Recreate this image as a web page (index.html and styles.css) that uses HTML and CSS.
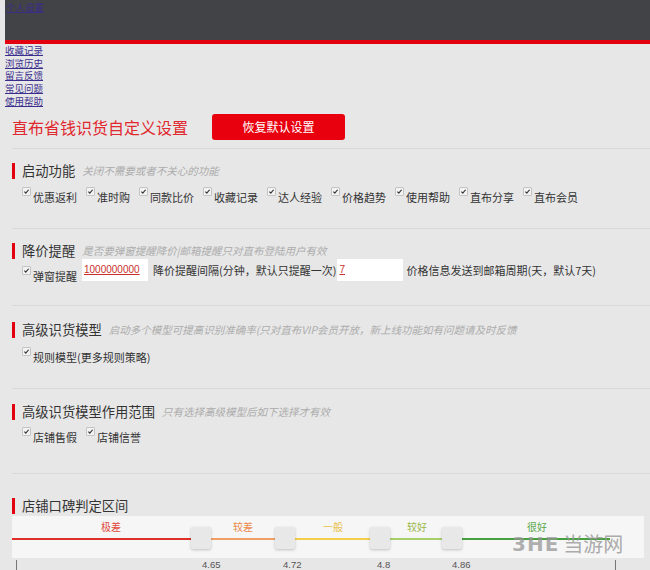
FILE: index.html
```html
<!DOCTYPE html>
<html lang="zh-CN">
<head>
<meta charset="utf-8">
<title>直布省钱识货自定义设置</title>
<link rel="stylesheet" href="styles.css">
</head>
<body>
<header class="top">
  <a class="top-link" href="#">个人设置</a>
</header>
<nav class="links">
  <a href="#">收藏记录</a>
  <a href="#">浏览历史</a>
  <a href="#">留言反馈</a>
  <a href="#">常见问题</a>
  <a href="#">使用帮助</a>
</nav>
<main class="content">
  <div class="title-row">
    <h1 class="title">直布省钱识货自定义设置</h1>
    <button class="reset">恢复默认设置</button>
  </div>

  <section class="sec s1">
    <div class="head"><span class="bar"></span><h2>启动功能</h2><em>关闭不需要或者不关心的功能</em></div>
    <div class="row">
      <label class="chk"><span class="box"><svg viewBox="0 0 8 8"><path d="M1.6 4.2 L3.2 5.8 L6.4 2" fill="none" stroke="#333" stroke-width="1.3"/></svg></span><span class="txt">优惠返利</span></label>
      <label class="chk"><span class="box"><svg viewBox="0 0 8 8"><path d="M1.6 4.2 L3.2 5.8 L6.4 2" fill="none" stroke="#333" stroke-width="1.3"/></svg></span><span class="txt">准时购</span></label>
      <label class="chk"><span class="box"><svg viewBox="0 0 8 8"><path d="M1.6 4.2 L3.2 5.8 L6.4 2" fill="none" stroke="#333" stroke-width="1.3"/></svg></span><span class="txt">同款比价</span></label>
      <label class="chk"><span class="box"><svg viewBox="0 0 8 8"><path d="M1.6 4.2 L3.2 5.8 L6.4 2" fill="none" stroke="#333" stroke-width="1.3"/></svg></span><span class="txt">收藏记录</span></label>
      <label class="chk"><span class="box"><svg viewBox="0 0 8 8"><path d="M1.6 4.2 L3.2 5.8 L6.4 2" fill="none" stroke="#333" stroke-width="1.3"/></svg></span><span class="txt">达人经验</span></label>
      <label class="chk"><span class="box"><svg viewBox="0 0 8 8"><path d="M1.6 4.2 L3.2 5.8 L6.4 2" fill="none" stroke="#333" stroke-width="1.3"/></svg></span><span class="txt">价格趋势</span></label>
      <label class="chk"><span class="box"><svg viewBox="0 0 8 8"><path d="M1.6 4.2 L3.2 5.8 L6.4 2" fill="none" stroke="#333" stroke-width="1.3"/></svg></span><span class="txt">使用帮助</span></label>
      <label class="chk"><span class="box"><svg viewBox="0 0 8 8"><path d="M1.6 4.2 L3.2 5.8 L6.4 2" fill="none" stroke="#333" stroke-width="1.3"/></svg></span><span class="txt">直布分享</span></label>
      <label class="chk"><span class="box"><svg viewBox="0 0 8 8"><path d="M1.6 4.2 L3.2 5.8 L6.4 2" fill="none" stroke="#333" stroke-width="1.3"/></svg></span><span class="txt">直布会员</span></label>
    </div>
  </section>

  <section class="sec s2">
    <div class="head"><span class="bar"></span><h2>降价提醒</h2><em>是否要弹窗提醒降价|邮箱提醒只对直布登陆用户有效</em></div>
    <div class="row row-inputs">
      <label class="chk chk-low"><span class="box"><svg viewBox="0 0 8 8"><path d="M1.6 4.2 L3.2 5.8 L6.4 2" fill="none" stroke="#333" stroke-width="1.3"/></svg></span><span class="txt">弹窗提醒</span></label>
      <span class="field">1000000000</span>
      <span class="plain p1">降价提醒间隔(分钟，默认只提醒一次)</span>
      <span class="field">7</span>
      <span class="plain p2">价格信息发送到邮箱周期(天，默认7天)</span>
    </div>
  </section>

  <section class="sec s3">
    <div class="head"><span class="bar"></span><h2>高级识货模型</h2><em>启动多个模型可提高识别准确率(只对直布VIP会员开放，新上线功能如有问题请及时反馈</em></div>
    <div class="row">
      <label class="chk"><span class="box"><svg viewBox="0 0 8 8"><path d="M1.6 4.2 L3.2 5.8 L6.4 2" fill="none" stroke="#333" stroke-width="1.3"/></svg></span><span class="txt">规则模型(更多规则策略)</span></label>
    </div>
  </section>

  <section class="sec s4">
    <div class="head"><span class="bar"></span><h2>高级识货模型作用范围</h2><em>只有选择高级模型后如下选择才有效</em></div>
    <div class="row">
      <label class="chk"><span class="box"><svg viewBox="0 0 8 8"><path d="M1.6 4.2 L3.2 5.8 L6.4 2" fill="none" stroke="#333" stroke-width="1.3"/></svg></span><span class="txt">店铺售假</span></label>
      <label class="chk"><span class="box"><svg viewBox="0 0 8 8"><path d="M1.6 4.2 L3.2 5.8 L6.4 2" fill="none" stroke="#333" stroke-width="1.3"/></svg></span><span class="txt">店铺信誉</span></label>
    </div>
  </section>

  <section class="sec s5">
    <div class="head"><span class="bar"></span><h2>店铺口碑判定区间</h2></div>
    <div class="slider">
      <span class="lvl l1" style="left:99px">极差</span>
      <span class="lvl l2" style="left:231px">较差</span>
      <span class="lvl l3" style="left:321px">一般</span>
      <span class="lvl l4" style="left:405px">较好</span>
      <span class="lvl l5" style="left:525px">很好</span>
      <span class="track"></span>
      <span class="handle" style="left:179px"></span>
      <span class="handle" style="left:263px"></span>
      <span class="handle" style="left:358px"></span>
      <span class="handle" style="left:430px"></span>
    </div>
    <div class="scale">
      <span class="tick" style="left:4px"></span>
      <span class="num" style="left:190px">4.65</span>
      <span class="num" style="left:271px">4.72</span>
      <span class="num" style="left:365px">4.8</span>
      <span class="num" style="left:440px">4.86</span>
      <span class="tick" style="left:603px"></span>
    </div>
  </section>
</main>
<div class="watermark"><span class="wm-logo">3HE</span><span class="wm-text">当游网</span></div>
</body>
</html>
```

FILE: styles.css
```css
* { box-sizing: border-box; }

html, body {
  margin: 0;
  padding: 0;
  background: #e7e7e7;
  font-family: "Noto Sans CJK SC", "Noto Sans", "Liberation Sans", sans-serif;
  color: #333;
  overflow: hidden;
}

body {
  width: 650px;
  height: 570px;
  position: relative;
}

.top {
  margin-left: 5px;
  height: 44px;
  background: #424347;
  border-bottom: 4px solid #e3000f;
  padding: 0 0 0 1px;
}

.top-link {
  display: block;
  font-size: 9.5px;
  line-height: 15px;
  color: #3a2d86;
}

.links {
  display: flex;
  flex-direction: column;
  align-items: flex-start;
  padding-left: 5px;
}

.links a {
  font-size: 9.5px;
  line-height: 12.7px;
  color: #3b2f8e;
}

.content {
  padding-left: 12px;
}

.title-row {
  display: flex;
  align-items: center;
  margin-top: 6px;
  height: 26px;
  margin-bottom: 8px;
}

.title {
  margin: 0;
  font-size: 16px;
  font-weight: normal;
  color: #e1282e;
  line-height: 26px;
}

.reset {
  margin-left: 24px;
  width: 133px;
  height: 26px;
  border: none;
  border-radius: 3px;
  background: #e8000e;
  color: #fff;
  font-family: inherit;
  font-size: 12px;
  padding: 0;
}

.sec {
  border-top: 1px solid #d9d9d9;
}

.s1 { padding: 14px 0 24px; }
.s2 { padding: 14px 0 22px; }
.s3 { padding: 16px 0 24px; }
.s4 { padding: 15px 0 29px; }
.s5 { padding: 24px 0 0; }

.head {
  display: flex;
  align-items: center;
  height: 16px;
}

.bar {
  width: 3px;
  height: 16px;
  background: #e3000f;
  margin-right: 7px;
}

.head h2 {
  margin: 0;
  font-size: 13.3px;
  font-weight: normal;
  color: #333;
  line-height: 16px;
}

.head em {
  margin-left: 7px;
  font-size: 10.5px;
  color: #acacac;
  font-style: italic;
  white-space: nowrap;
}

.row {
  display: flex;
  align-items: flex-start;
  margin-top: 8px;
  padding-left: 10px;
}

.s3 .row { margin-top: 9px; }
.s4 .row { margin-top: 7px; }

.chk {
  display: flex;
  align-items: flex-start;
  margin-right: 9px;
}

.box {
  width: 9px;
  height: 9px;
  border: 1px solid #c4c4c4;
  background: #f3f3f3;
  border-radius: 1px;
  margin-right: 2px;
  display: flex;
}

.box svg {
  width: 7px;
  height: 7px;
}

.txt {
  font-size: 11px;
  line-height: 14px;
  padding-top: 3px;
  color: #333;
  white-space: nowrap;
}

.row-inputs {
  margin-top: 0;
}

.chk-low {
  margin-top: 7px;
  margin-right: 5px;
}

.field {
  width: 66px;
  height: 22px;
  background: #fff;
  font-size: 10px;
  line-height: 22px;
  padding-left: 2px;
  color: #c9302c;
  text-decoration: underline;
  font-family: "Liberation Sans", sans-serif;
}

.plain {
  font-size: 11px;
  line-height: 22px;
  white-space: nowrap;
}

.p1 { margin: 0 1px 0 5px; }
.p2 { margin-left: 3px; }

.slider {
  position: relative;
  margin-top: 2px;
  height: 42px;
  width: 632px;
  background: #f6f6f6;
}

.lvl {
  position: absolute;
  top: 5px;
  font-size: 10px;
  line-height: 12px;
  transform: translateX(-50%);
  white-space: nowrap;
}

.l1 { color: #e04a3a; }
.l2 { color: #e98b4c; }
.l3 { color: #e8bf4a; }
.l4 { color: #9ab84c; }
.l5 { color: #5aa84a; }

.track {
  position: absolute;
  left: 0;
  top: 22px;
  width: 598px;
  height: 2px;
  background: linear-gradient(to right,
    #de3027 0, #de3027 186px,
    #f0a064 194px, #f0a064 262px,
    #f4cd4c 276px, #f4cd4c 360px,
    #a6cf6a 370px, #a6cf6a 432px,
    #47a03e 442px, #47a03e 598px);
}

.handle {
  position: absolute;
  top: 11px;
  width: 20px;
  height: 22px;
  background: #e8e8e8;
  border-radius: 2px;
  box-shadow: 0 1px 3px rgba(0, 0, 0, 0.22);
}

.scale {
  position: relative;
  height: 12px;
}

.tick {
  position: absolute;
  top: 2px;
  width: 1px;
  height: 10px;
  background: #777;
}

.num {
  position: absolute;
  top: 1px;
  font-size: 9.5px;
  line-height: 12px;
  color: #555;
  font-family: "Liberation Sans", sans-serif;
}

.watermark {
  position: absolute;
  left: 512px;
  top: 534px;
  height: 20px;
  display: flex;
  align-items: center;
  gap: 4px;
  pointer-events: none;
}

.wm-logo {
  font-family: "DejaVu Sans", sans-serif;
  font-weight: bold;
  font-size: 20px;
  line-height: 20px;
  letter-spacing: 1px;
  color: rgba(150, 150, 150, 0.75);
}

.wm-text {
  font-size: 20px;
  line-height: 20px;
  color: rgba(150, 150, 150, 0.8);
}
```
